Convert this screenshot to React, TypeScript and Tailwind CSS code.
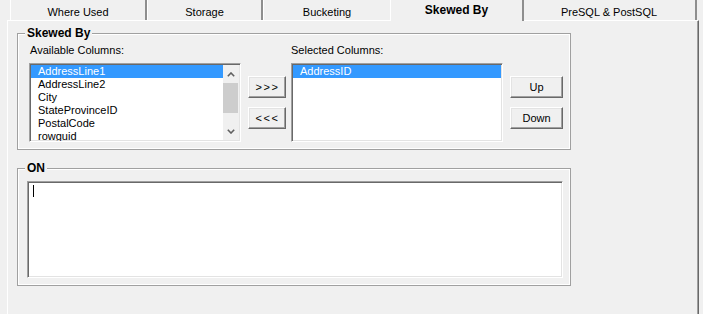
import React from "react";

const sunken =
  "border border-t-[#a0a0a0] border-l-[#a0a0a0] border-b-white border-r-white shadow-[inset_1px_1px_0_#696969,inset_-1px_-1px_0_#e3e3e3]";
const raised =
  "border border-t-white border-l-white border-b-[#696969] border-r-[#696969] shadow-[inset_-1px_-1px_0_#a0a0a0,inset_1px_1px_0_#e3e3e3]";

function Tab({ label, className }: { label: string; className: string }) {
  return (
    <div
      className={`h-[20px] flex items-center justify-center pt-[4px] border-l border-l-white border-r-2 border-r-[#8e8e8e] text-[11px] text-black ${className}`}
    >
      {label}
    </div>
  );
}

function Button({ label, wide }: { label: string; wide?: boolean }) {
  return (
    <div
      className={`h-[22px] w-full flex items-center justify-center bg-[#f0f0f0] text-[11px] text-black ${
        wide ? "tracking-[1.5px] pl-[1px]" : ""
      } ${raised}`}
    >
      {label}
    </div>
  );
}

function Chevron({ up }: { up?: boolean }) {
  return (
    <svg width="8" height="5" viewBox="0 0 8 5">
      <path
        d={up ? "M0.8 4.2 L4 1 L7.2 4.2" : "M0.8 0.8 L4 4 L7.2 0.8"}
        fill="none"
        stroke="#606060"
        strokeWidth="1.6"
      />
    </svg>
  );
}

function Group({
  title,
  className,
  children,
}: {
  title: string;
  className: string;
  children: React.ReactNode;
}) {
  return (
    <div
      className={`relative border border-[#a0a0a0] shadow-[inset_0_0_0_1px_#ffffff] ${className}`}
    >
      <span className="absolute left-[7px] top-[-8px] h-[14px] leading-[14px] px-[2px] bg-[#f0f0f0] text-[12px] font-bold text-black">
        {title}
      </span>
      {children}
    </div>
  );
}

function Item({ label, selected }: { label: string; selected?: boolean }) {
  return (
    <div
      className={`h-[13px] leading-[13px] pl-[7px] text-[11px] whitespace-nowrap ${
        selected ? "bg-[#3399ff] text-white" : "text-black"
      }`}
    >
      {label}
    </div>
  );
}

export default function App() {
  const available = [
    "AddressLine1",
    "AddressLine2",
    "City",
    "StateProvinceID",
    "PostalCode",
    "rowguid",
  ];

  return (
    <div className="w-[703px] h-[314px] overflow-hidden bg-[#f0f0f0] flex flex-col font-['Liberation_Sans',Arial,sans-serif]">
      {/* tab strip */}
      <div className="h-[20px] flex items-start pl-[10px] shrink-0">
        <Tab label="Where Used" className="w-[137px]" />
        <Tab label="Storage" className="w-[116px]" />
        <Tab label="Bucketing" className="w-[129px]" />
        <div className="relative z-10 -mx-[2px] w-[134px] h-[21px] flex items-center justify-center pb-[1px] bg-[#f0f0f0] border-l border-l-white border-r-2 border-r-[#8e8e8e] text-[12px] font-bold text-black">
          Skewed By
        </div>
        <Tab label="PreSQL & PostSQL" className="w-[175px]" />
      </div>

      {/* tab page */}
      <div className="ml-[7px] w-[692px] flex-1 border-t border-l border-t-white border-l-white border-r border-r-[#696969] shadow-[inset_-1px_0_0_#a0a0a0] pl-[9px] pt-[12px]">
        <Group title="Skewed By" className="w-[554px] h-[117px] pl-[11px] pt-[10px]">
          <div className="flex items-start">
            <div className="w-[212px] flex flex-col">
              <div className="h-[13px] leading-[13px] pl-px text-[11px] text-black">Available Columns:</div>
              <div className={`mt-[6px] h-[79px] bg-white flex ${sunken}`}>
                <div className="flex-1 pt-px pl-px overflow-hidden">
                  {available.map((a, i) => (
                    <Item key={a} label={a} selected={i === 0} />
                  ))}
                </div>
                <div className="w-[16px] mt-px mb-px mr-px flex flex-col bg-[#f0f0f0]">
                  <div className="h-[18px] flex items-center justify-center">
                    <Chevron up />
                  </div>
                  <div className="h-[30px] w-[15px] bg-[#cdcdcd]" />
                  <div className="flex-1" />
                  <div className="h-[18px] flex items-center justify-center">
                    <Chevron />
                  </div>
                </div>
              </div>
            </div>

            <div className="ml-[7px] mt-[32px] w-[38px] flex flex-col gap-[9px]">
              <Button label=">>>" wide />
              <Button label="<<<" wide />
            </div>

            <div className="ml-[5px] w-[212px] flex flex-col">
              <div className="h-[13px] leading-[13px] text-[11px] text-black">Selected Columns:</div>
              <div className={`mt-[6px] h-[79px] bg-white pt-px pl-px pr-px ${sunken}`}>
                <Item label="AddressID" selected />
              </div>
            </div>

            <div className="ml-[7px] mt-[32px] w-[53px] flex flex-col gap-[9px]">
              <Button label="Up" />
              <Button label="Down" />
            </div>
          </div>
        </Group>

        <Group title="ON" className="mt-[18px] w-[554px] h-[118px] pl-[9px] pt-[12px]">
          <div className={`w-[536px] h-[97px] bg-white pl-[5px] pt-[3px] ${sunken}`}>
            <div className="w-px h-[12px] bg-black" />
          </div>
        </Group>
      </div>
    </div>
  );
}
